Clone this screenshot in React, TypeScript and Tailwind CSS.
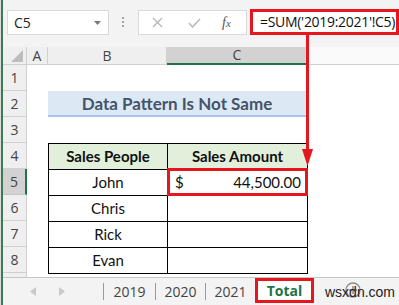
import React from "react";

const rowNums = [1, 2, 3, 4, 5, 6, 7, 8];

export default function App() {
  return (
    <div className="relative w-[399px] h-[305px] overflow-hidden bg-white flex font-['Lato',sans-serif]">
      <div className="w-[1px] h-full bg-[#dcdcdc]" />
      <div className="w-[2px] h-full bg-[#3b7b52]" />
      <div className="flex-1 flex flex-col">
        {/* toolbar */}
        <div className="h-[47px] bg-[#f3f3f3] flex items-start pt-[10px] pl-[4px] font-['Open_Sans',sans-serif]">
          <div className="w-[102px] h-[25px] bg-white border border-[#d9d9d9] flex items-center justify-between pl-[6px] pr-[7px]">
            <span className="text-[14px] text-[#222] leading-none">C5</span>
            <svg width="7" height="4" viewBox="0 0 7 4"><polygon points="0,0 7,0 3.5,4" fill="#7a7a7a" /></svg>
          </div>
          <div className="ml-[13px] mt-[7px] flex flex-col gap-[2px]">
            <div className="w-[2px] h-[2px] bg-[#a6a6a6]" />
            <div className="w-[2px] h-[2px] bg-[#a6a6a6]" />
            <div className="w-[2px] h-[2px] bg-[#a6a6a6]" />
          </div>
          <div className="ml-[14px] w-[109px] h-[25px] bg-white border border-[#d9d9d9] flex items-center">
            <svg className="ml-[13px]" width="11" height="11" viewBox="0 0 11 11">
              <path d="M1 1 L10 10 M10 1 L1 10" stroke="#b5b5b5" strokeWidth="1.3" />
            </svg>
            <svg className="ml-[25px]" width="13" height="10" viewBox="0 0 13 10">
              <path d="M1 5 L4.5 9 L12 1" stroke="#b5b5b5" strokeWidth="1.4" fill="none" />
            </svg>
            <span className="ml-[21px] text-[14px] italic text-[#555] font-['Liberation_Serif',serif] leading-none">
              f<span className="text-[11px]">x</span>
            </span>
          </div>
          <div className="ml-[3px] -mt-[1px] flex-1 h-[26px] bg-white border-[3px] border-[#e5161d] flex items-center pl-[7px]">
            <span className="text-[14px] text-[#111] leading-none whitespace-nowrap font-['Open_Sans',sans-serif] tracking-[-0.3px]">
              =SUM('2019:2021'!C5)
            </span>
          </div>
        </div>

        {/* column headers */}
        <div className="h-[18px] flex text-[14px] text-[#444] font-['Open_Sans',sans-serif]">
          <div className="w-[24px] h-full bg-[#efefef] border-r border-b border-[#d0d0d0] relative flex items-end justify-end pr-[3px] pb-[2px]">
            <svg width="12" height="12" viewBox="0 0 12 12"><polygon points="0,12 12,0 12,12" fill="#bdbdbd" /></svg>
          </div>
          <div className="w-[21px] h-full bg-[#efefef] border-r border-b border-[#d0d0d0] flex items-center justify-center leading-none">A</div>
          <div className="w-[119px] h-full bg-[#efefef] border-r border-b border-[#d0d0d0] flex items-center justify-center leading-none">B</div>
          <div className="w-[140px] h-full bg-[#d2d2d2] border-b-2 border-[#217346] flex items-center justify-center leading-none">C</div>
          <div className="flex-1 h-full bg-[#fafafa] border-b border-[#d0d0d0]" />
        </div>

        {/* body */}
        <div className="h-[212px] flex">
          <div className="w-[24px] flex flex-col text-[14px] text-[#444] font-['Open_Sans',sans-serif]">
            {rowNums.map((n) => (
              <div
                key={n}
                className={
                  n === 5
                    ? "h-[26px] bg-[#d2d2d2] border-r-2 border-r-[#217346] border-b border-b-[#c6c6c6] flex items-center justify-center leading-none"
                    : "h-[26px] bg-[#efefef] border-r border-b border-[#d0d0d0] flex items-center justify-center leading-none"
                }
              >
                {n}
              </div>
            ))}
            <div className="flex-1 bg-[#efefef] border-r border-[#d0d0d0]" />
          </div>
          <div className="flex-1 flex flex-col">
            <div className="h-[26px]" />
            <div className="h-[26px] ml-[21px] w-[258px] bg-[#dde8f5] border-b-2 border-[#a7c3e8] flex items-center justify-center">
              <span className="text-[17px] font-bold text-[#44546a] leading-none">Data Pattern Is Not Same</span>
            </div>
            <div className="h-[26px]" />
            <div className="ml-[21px] w-[260px] bg-black p-px grid grid-cols-[118px_139px] auto-rows-[25px] gap-px text-[15px] text-[#111]">
              <div className="bg-[#e2efda] flex items-center justify-center font-bold">Sales People</div>
              <div className="bg-[#e2efda] flex items-center justify-center font-bold">Sales Amount</div>
              <div className="bg-white flex items-center justify-center">John</div>
              <div className="bg-white flex items-center justify-between pl-[7px] pr-[6px]">
                <span>$</span>
                <span>44,500.00</span>
              </div>
              <div className="bg-white flex items-center justify-center">Chris</div>
              <div className="bg-white" />
              <div className="bg-white flex items-center justify-center">Rick</div>
              <div className="bg-white" />
              <div className="bg-white flex items-center justify-center">Evan</div>
              <div className="bg-white" />
            </div>
          </div>
        </div>

        {/* sheet tabs */}
        <div className="h-[28px] bg-[#f3f3f3] border-t border-[#c6c6c6] flex items-center text-[14px] text-[#444] font-['Open_Sans',sans-serif]">
          <div className="w-[100px] flex items-center pl-[27px]">
            <svg width="6" height="9" viewBox="0 0 6 9"><polygon points="6,0 6,9 0,4.5" fill="#c9c9c9" /></svg>
            <svg className="ml-[23px]" width="6" height="9" viewBox="0 0 6 9"><polygon points="0,0 0,9 6,4.5" fill="#c9c9c9" /></svg>
          </div>
          <div className="w-px h-[17px] bg-[#9a9a9a]" />
          <div className="w-[51px] text-center leading-none">2019</div>
          <div className="w-px h-[17px] bg-[#9a9a9a]" />
          <div className="w-[49px] text-center leading-none">2020</div>
          <div className="w-px h-[17px] bg-[#9a9a9a]" />
          <div className="w-[49px] text-center leading-none">2021</div>
          <div className="-mt-[2px] w-[59px] h-[25px] bg-white border-[3px] border-[#e5161d] flex items-center justify-center">
            <span className="font-bold text-[#217346] leading-none">Total</span>
          </div>
          <svg className="ml-[31px] -mt-[3px]" width="16" height="16" viewBox="0 0 16 16">
            <circle cx="8" cy="8" r="7" fill="none" stroke="#8a8a8a" strokeWidth="1.3" />
            <path d="M8 4 V12 M4 8 H12" stroke="#8a8a8a" strokeWidth="1.5" />
          </svg>
        </div>
      </div>

      {/* overlays */}
      <div className="absolute left-[325px] top-[285px] text-[14px] text-[#222] font-['Liberation_Sans',sans-serif] leading-none whitespace-nowrap">wsxdn.com</div>
      <div className="absolute left-[167px] top-[168px] w-[141px] h-[28px] border-[3px] border-[#e5161d]" />
      <div className="absolute left-[306px] top-[35px] w-[3px] h-[116px] bg-[#e5161d]" />
      <svg className="absolute left-[302px] top-[149px]" width="11" height="17" viewBox="0 0 11 17">
        <polygon points="0,0 11,0 5.5,17" fill="#e5161d" />
      </svg>
    </div>
  );
}
